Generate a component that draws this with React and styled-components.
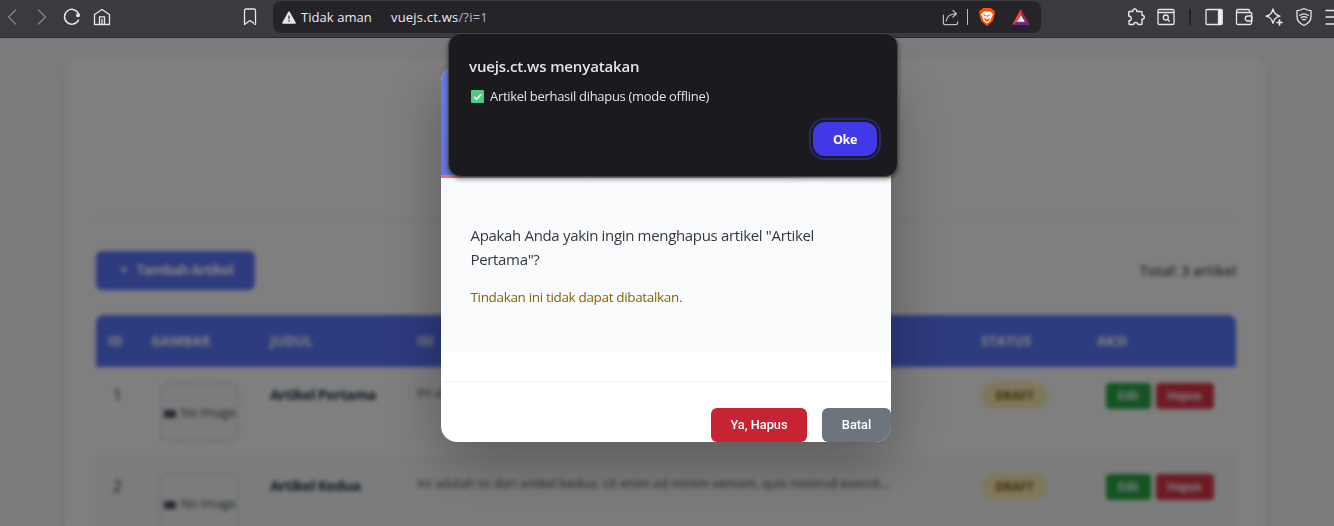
import React from "react";
import styled, { createGlobalStyle } from "styled-components";

const GlobalStyle = createGlobalStyle`
  * { box-sizing: border-box; }
  body { margin: 0; overflow: hidden; font-family: "Open Sans", "Noto Sans", sans-serif; }
`;

const Window = styled.div`
  position: relative;
  display: flex;
  flex-direction: column;
  width: 1334px;
  height: 526px;
  overflow: hidden;
`;

/* ---------- browser toolbar ---------- */
const Toolbar = styled.header`
  display: flex;
  align-items: flex-start;
  height: 38px;
  flex: none;
  background: #3c3a3f;
  border-bottom: 1px solid #2c2b2f;
`;
const NavIcons = styled.div`
  display: flex;
  flex: none;
  width: 273px;
  height: 34px;
  align-items: center;
  padding-left: 2px;
  svg { flex: none; margin-right: 10px; }
  svg:last-child { margin-left: 118px; margin-right: 0; }
`;
const AddressBar = styled.div`
  display: flex;
  flex: none;
  align-items: center;
  width: 768px;
  height: 32px;
  margin-top: 1px;
  padding: 0 10px 0 9px;
  border-radius: 8px;
  background: #252428;
  color: #ececee;
  font-size: 13px;
  white-space: nowrap;
`;
const Security = styled.span`
  margin-left: 5px;
  width: 90px;
  letter-spacing: 0.05px;
`;
const Url = styled.span`
  flex: 1;
  letter-spacing: 0.2px;
  span { color: #b5b4b9; }
`;
const AddressRule = styled.i`
  width: 1px;
  height: 16px;
  margin: 0 10px 0 7px;
  background: #bdbcc1;
`;
const AddressGap = styled.i`
  width: 15px;
`;
const Extensions = styled.div`
  display: flex;
  flex: none;
  align-items: center;
  height: 34px;
  padding-left: 85px;
  svg { flex: none; margin-right: 10px; }
`;
const ToolRule = styled.i`
  flex: none;
  width: 2px;
  height: 16px;
  margin: 0 13px 0 3px;
  background: #222125;
`;

const Icon = ({ size = 20, color = "#e6e5ea", sw = 1.3, children }) => (
  <svg width={size} height={size} viewBox="0 0 20 20" fill="none" stroke={color}
    strokeWidth={sw} strokeLinecap="round" strokeLinejoin="round">{children}</svg>
);

const ShieldLion = () => (
  <svg width="18" height="20" viewBox="0 0 18 20">
    <path d="M5 1h8l1.700 1.700 1.500.2.800 3.200-2.200 8L9 19l-5.800-4.900L1 6.100l.8-3.200 1.500-.2z" fill="#fb4f0b" />
    <path d="M6 4.200l3 .6 3-.6 3 3.200-1.800 3.600-1 3.100L9 16.500l-3.200-2.400-1-3.100L3 7.400z" fill="#fff" />
    <path d="M5 7.300l3 .8-.8 1.500zM13 7.300l-3 .8.8 1.500zM6 11l2.300 1L9 13.200l.7-1.200 2.300-1-1 2.700-2 1-2-1zM8.300 8.200h1.400L9 11z" fill="#fb4f0b" />
  </svg>
);
const TriangleToken = () => (
  <svg width="20" height="18" viewBox="0 0 20 18">
    <path d="M10 1L1 17l5.500-3.200L10 7.500z" fill="#ff4724" />
    <path d="M10 1l9 16-5.500-3.200L10 7.500z" fill="#9e1f63" />
    <path d="M1 17h18l-5.500-3.500h-7z" fill="#662d91" />
    <path d="M10 7.300l3.800 6.500H6.200z" fill="#fff" />
  </svg>
);

/* ---------- page ---------- */
const Page = styled.main`
  position: relative;
  flex: 1;
  padding: 20px 68px 0 66px;
  overflow: hidden;
  background: #f5f7fa;
`;
const Card = styled.section`
  height: 600px;
  padding: 0 30px;
  border-radius: 12px;
  background: #fff;
  box-shadow: 0 2px 10px rgba(0, 0, 0, 0.08);
`;
const CardHeader = styled.div`
  height: 162px;
  border-bottom: 2px solid #eef0f3;
`;
const Actions = styled.div`
  display: flex;
  justify-content: space-between;
  align-items: center;
  height: 39px;
  margin: 31px 0 25px;
`;
const AddButton = styled.button`
  display: flex;
  align-items: center;
  justify-content: center;
  gap: 9px;
  width: 159px;
  height: 39px;
  padding: 0 0 2px 2px;
  border: 0;
  border-radius: 6px;
  background: #5b76fe;
  color: #fff;
  font: 700 14px "Open Sans", sans-serif;
  letter-spacing: -0.8px;
`;
const Total = styled.span`
  color: #535c64;
  font-size: 14px;
  font-weight: 600;
  letter-spacing: -0.05px;
`;
const Table = styled.div`
  border-radius: 8px;
  overflow: hidden;
  box-shadow: 0 0 3px rgba(0, 0, 0, 0.05);
`;
const Row = styled.div`
  display: grid;
  grid-template-columns: 43px 119px 147px 564px 116px 151px;
  height: 91px;
  padding-top: 15px;
  border-bottom: 1px solid #e6ebec;
  background: ${(p) => (p.$even ? "#f8f9fa" : "#fff")};
`;
const HeadRow = styled(Row)`
  align-items: center;
  height: 52px;
  padding: 0 0 1px;
  border: 0;
  background: #5b76fe;
  color: #fff;
  font-size: 13.5px;
  font-weight: 700;
  letter-spacing: 0.05px;
`;
const Cell = styled.div`
  padding: 0 12px;
  text-align: ${(p) => (p.$center ? "center" : "left")};
  white-space: nowrap;
`;
const IdCell = styled(Cell)`
  color: #343b42;
  font-size: 15.5px;
  line-height: 26px;
`;
const TitleCell = styled(Cell)`
  color: #2c3e50;
  font-size: 14.5px;
  font-weight: 700;
  line-height: 26px;
  letter-spacing: -0.65px;
`;
const BodyCell = styled(Cell)`
  color: #4d565e;
  font-size: 13px;
  line-height: 20px;
  letter-spacing: -0.15px;
`;
const NoImage = styled.div`
  display: flex;
  align-items: center;
  justify-content: center;
  gap: 5px;
  width: 80px;
  height: 60px;
  margin: 0 auto;
  padding-left: 2px;
  border: 2px dashed #cdd3d9;
  border-radius: 6px;
  background: #f8f9fa;
  color: #4d565e;
  font-size: 12.5px;
  letter-spacing: -0.2px;
`;
const Camera = styled.i`
  width: 12px;
  height: 8px;
  margin-top: 3px;
  border-radius: 1px;
  background: #5d4d66;
`;
const Badge = styled.span`
  display: inline-block;
  width: 67px;
  height: 27px;
  border-radius: 14px;
  background: #ffedb8;
  color: #7d5f08;
  font-size: 12px;
  font-weight: 700;
  line-height: 27px;
  text-align: center;
`;
const RowActions = styled.div`
  display: flex;
  justify-content: center;
  gap: 5px;
  padding: 1px 2px 0 0;
`;
const SmallButton = styled.button`
  width: ${(p) => p.$w}px;
  height: 26px;
  padding: 0;
  border: 0;
  border-radius: 4px;
  background: ${(p) => p.$bg};
  color: #fff;
  font: 600 12px Roboto, Arial, sans-serif;
`;

/* ---------- confirmation modal ---------- */
const Overlay = styled.div`
  position: absolute;
  inset: 0;
  display: flex;
  justify-content: center;
  align-items: flex-start;
  padding: 28px 2px 0 0;
  background: rgba(0, 0, 0, 0.5);
  backdrop-filter: blur(2px);
`;
const Modal = styled.section`
  width: 450px;
  height: 376px;
  border-radius: 16px;
  overflow: hidden;
  background: #fff;
  box-shadow: 0 20px 60px rgba(0, 0, 0, 0.3);
`;
const ModalHeader = styled.div`
  display: flex;
  align-items: flex-end;
  height: 112px;
  background: linear-gradient(135deg, #667eea 0%, #764ba2 100%);
`;
const Stripe = styled.div`
  width: 100%;
  height: 3px;
  background: linear-gradient(90deg, #ff6b6b, #4ecdc4, #45b7d1, #feca57);
`;
const ModalBody = styled.div`
  height: 173px;
  padding: 45px 30px 0 29.5px;
  background: #fafbfd;
`;
const Question = styled.p`
  margin: 0;
  color: #36393c;
  font-size: 15px;
  line-height: 24px;
  letter-spacing: -0.33px;
`;
const Warning = styled.p`
  margin: 15px 0 0;
  color: #856404;
  font-size: 13.5px;
  line-height: 22px;
  letter-spacing: -0.34px;
`;
const ModalFooter = styled.div`
  display: flex;
  justify-content: flex-end;
  gap: 15px;
  margin-top: 30px;
  padding-top: 25px;
  border-top: 2px solid #f8f9fa;
`;
const ModalButton = styled.button`
  width: ${(p) => p.$w}px;
  height: 34px;
  padding: 0 0 1px;
  border: 0;
  border-radius: 6px;
  background: ${(p) => p.$bg};
  color: #fff;
  font: 500 12.75px Roboto, Arial, sans-serif;
`;

/* ---------- browser alert ---------- */
const Alert = styled.section`
  position: absolute;
  left: 448px;
  top: 33px;
  width: 450px;
  height: 144px;
  padding: 21px 20px 0;
  border: 1px solid #46454b;
  border-radius: 13px;
  background: #1b1a1f;
  box-shadow: 0 2px 5px rgba(0, 0, 0, 0.5);
  color: #e4e3e8;
`;
const AlertTitle = styled.h1`
  margin: 0;
  font-size: 15px;
  font-weight: 600;
  line-height: 22px;
  letter-spacing: -0.13px;
`;
const AlertMessage = styled.p`
  display: flex;
  align-items: center;
  gap: 6px;
  margin: 9px 0 0 2px;
  font-size: 13px;
  line-height: 20px;
  letter-spacing: -0.3px;
`;
const AlertActions = styled.div`
  display: flex;
  justify-content: flex-end;
  margin-top: 16px;
`;
const OkButton = styled.button`
  width: 64px;
  height: 34px;
  padding: 0;
  border: 0;
  border-radius: 12px;
  outline: 2px solid #29276c;
  outline-offset: 2px;
  background: #4138e8;
  color: #fff;
  font: 700 12.5px "Open Sans", sans-serif;
  letter-spacing: -0.3px;
`;

const rows = [
  { id: 1, title: "Artikel Pertama", body: "Ini adalah isi dari artikel pertama." },
  { id: 2, title: "Artikel Kedua", body: "Ini adalah isi dari artikel kedua. Ut enim ad minim veniam, quis nostrud exercit..." },
];

export default function App() {
  return (
    <Window>
      <GlobalStyle />
      <Toolbar>
        <NavIcons>
          <Icon color="#858489"><path d="M13.500 3L6.500 10l7 7" /></Icon>
          <Icon color="#858489"><path d="M6.500 3l7 7-7 7" /></Icon>
          <Icon sw={1.5}><path d="M16.500 13.200A7.400 7.400 0 1 1 16.800 7" /><circle cx="16" cy="8.200" r="2" fill="#e6e5ea" stroke="none" /></Icon>
          <Icon><path d="M2.500 7.500L10 2.500l7.500 5V17.500h-15zM7.500 17V9.800h5V17M10 12.500v4.500" /></Icon>
          <Icon><path d="M4.500 3.500q0-1.500 1.500-1.500h8q1.500 0 1.500 1.500V17.500L10 13.500l-5.500 4z" /></Icon>
        </NavIcons>
        <AddressBar>
          <svg width="14" height="13" viewBox="0 0 14 13">
            <path d="M7 1.200L13 12H1z" fill="#e6e5ea" stroke="#e6e5ea" strokeWidth="1.600" strokeLinejoin="round" />
            <path d="M7 4.500v3.700M7 9.300v1.500" stroke="#555459" strokeWidth="1.500" />
          </svg>
          <Security>Tidak aman</Security>
          <Url>vuejs.ct.ws<span>/?i=1</span></Url>
          <Icon size={19} color="#bdbcc1"><path d="M2.500 7.500v8q0 2 2 2h11q2 0 2-2v-1M5.500 13.500q1-7 10.500-7.500M12.500 2.500L16.300 6l-3.800 3.500" /></Icon>
          <AddressRule />
          <ShieldLion />
          <AddressGap />
          <TriangleToken />
        </AddressBar>
        <Extensions>
          <Icon sw={1.4}><path d="M3.200 4.500h3.600Q6.600 2 8.800 2t2 2.500h4.400q.8 0 .8.800v2.900q2.300 0 2.300 2t-2.300 2v4.500q0 .8-.8.800h-3.200q-.2-2-2.200-2t-2.200 2H3.800q-.8 0-.8-.8v-3q2.300 0 2.300-2.200T2.700 9V5z" /></Icon>
          <Icon><rect x="2" y="2.500" width="16" height="15" rx="1.200" /><path d="M2 5.500h16" /><circle cx="9.800" cy="10.500" r="2.500" /><path d="M11.700 12.400l1.600 1.800" /></Icon>
          <ToolRule />
          <Icon><rect x="2" y="2.500" width="16" height="15" rx="1" /><path d="M14.500 3h3.500v14h-3.500z" fill="#f0eff4" /></Icon>
          <Icon><path d="M17.500 6.500V16q0 1.500-1.500 1.500H4Q2.500 17.500 2.500 16V4Q2.500 2.500 4 2.500h10.500q1 0 1 1.500v1M2.500 5.500h14q1.300 0 1.300 1.300M18 9h-4.200a2.500 2.500 0 0 0 0 5H18z" /></Icon>
          <Icon><path d="M9 2q1.200 6 7 7.200-5.800 1.200-7 7.200Q7.800 10.400 2 9.200 7.800 8 9 2z" /><path d="M15.500 13v5M13 15.500h5" strokeWidth="1.700" /></Icon>
          <Icon><path d="M10 1.500q3.500 1.800 7 2.200v6q0 5.500-7 8.800-7-3.300-7-8.800v-6q3.500-.4 7-2.200z" /><path d="M5.800 8.300q4.200-3 8.400 0M7.200 10.600q2.800-1.900 5.600 0M8.700 12.800q1.300-.8 2.600 0" /></Icon>
          <Icon><path d="M2 3.500h16M2 10h16M2 17h16" /></Icon>
        </Extensions>
      </Toolbar>

      <Page>
        <Card>
          <CardHeader />
          <Actions>
            <AddButton><span>+</span>Tambah Artikel</AddButton>
            <Total>Total: 3 artikel</Total>
          </Actions>
          <Table>
            <HeadRow>
              <Cell>ID</Cell><Cell>GAMBAR</Cell><Cell>JUDUL</Cell><Cell>ISI</Cell><Cell>STATUS</Cell><Cell>AKSI</Cell>
            </HeadRow>
            {rows.map((r) => (
              <Row key={r.id} $even={r.id % 2 === 0}>
                <IdCell $center>{r.id}</IdCell>
                <Cell><NoImage><Camera />No Image</NoImage></Cell>
                <TitleCell>{r.title}</TitleCell>
                <BodyCell>{r.body}</BodyCell>
                <Cell><Badge>DRAFT</Badge></Cell>
                <RowActions>
                  <SmallButton $w={45} $bg="#28a745">Edit</SmallButton>
                  <SmallButton $w={58} $bg="#dc3545">Hapus</SmallButton>
                </RowActions>
              </Row>
            ))}
          </Table>
        </Card>
        <Overlay>
          <Modal>
            <ModalHeader><Stripe /></ModalHeader>
            <ModalBody>
              <Question>Apakah Anda yakin ingin menghapus artikel "Artikel Pertama"?</Question>
              <Warning>Tindakan ini tidak dapat dibatalkan.</Warning>
            </ModalBody>
            <ModalFooter>
              <ModalButton $w={96} $bg="#c82333">Ya, Hapus</ModalButton>
              <ModalButton $w={69} $bg="#6c757d">Batal</ModalButton>
            </ModalFooter>
          </Modal>
        </Overlay>
      </Page>

      <Alert>
        <AlertTitle>vuejs.ct.ws menyatakan</AlertTitle>
        <AlertMessage>
          <svg width="13" height="13" viewBox="0 0 13 13">
            <rect width="13" height="13" rx="1" fill="#4fcb83" />
            <path d="M3 6.800l2.500 2.500 4.700-5" fill="none" stroke="#fff" strokeWidth="1.500" />
          </svg>
          Artikel berhasil dihapus (mode offline)
        </AlertMessage>
        <AlertActions><OkButton>Oke</OkButton></AlertActions>
      </Alert>
    </Window>
  );
}
